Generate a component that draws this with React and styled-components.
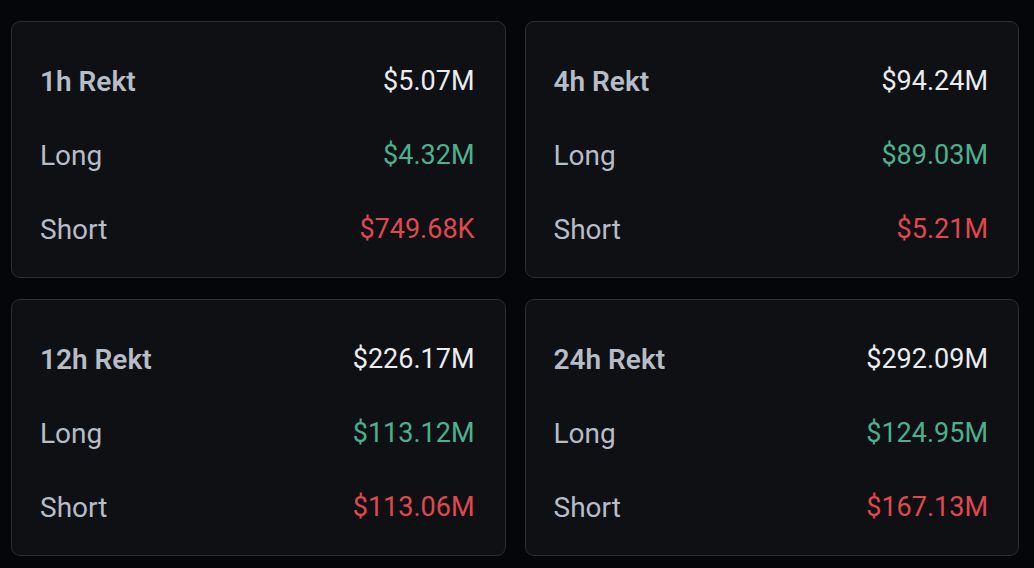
import styled, { createGlobalStyle } from 'styled-components'

const GlobalStyle = createGlobalStyle`
  html, body {
    margin: 0;
    padding: 0;
    background: #05060a;
  }
  * {
    box-sizing: border-box;
  }
`

const StyledGrid = styled.main`
  display: grid;
  grid-template-columns: 1fr 1fr;
  grid-template-rows: 1fr 1fr;
  column-gap: 19px;
  row-gap: 21px;
  height: 100vh;
  padding: 21px 15px 12px 11px;
  font-family: Roboto, 'Liberation Sans', sans-serif;
`

const StyledCard = styled.section`
  display: flex;
  flex-direction: column;
  padding: 22px 30px 10px 28px;
  background-color: #0e1014;
  border: 1px solid #2a2d34;
  border-radius: 9px;
`

const StyledRow = styled.div`
  display: flex;
  align-items: center;
  justify-content: space-between;
  height: 74px;
`

const StyledLabel = styled.span`
  color: #b7bdc6;
  font-size: 28px;
  font-weight: ${(props) => (props.$title ? 600 : 400)};
`

const tones = {
  total: '#eaecef',
  long: '#4cb08d',
  short: '#e0484f',
}

const StyledValue = styled.span`
  color: ${(props) => tones[props.$tone]};
  font-size: 27px;
  font-weight: 400;
`

const stats = [
  { period: '1h', total: '$5.07M', long: '$4.32M', short: '$749.68K' },
  { period: '4h', total: '$94.24M', long: '$89.03M', short: '$5.21M' },
  { period: '12h', total: '$226.17M', long: '$113.12M', short: '$113.06M' },
  { period: '24h', total: '$292.09M', long: '$124.95M', short: '$167.13M' },
]

const RektCard = ({ period, total, long, short }) => {
  return (
    <StyledCard>
      <StyledRow>
        <StyledLabel $title>{period} Rekt</StyledLabel>
        <StyledValue $tone="total">{total}</StyledValue>
      </StyledRow>
      <StyledRow>
        <StyledLabel>Long</StyledLabel>
        <StyledValue $tone="long">{long}</StyledValue>
      </StyledRow>
      <StyledRow>
        <StyledLabel>Short</StyledLabel>
        <StyledValue $tone="short">{short}</StyledValue>
      </StyledRow>
    </StyledCard>
  )
}

const App = () => {
  return (
    <>
      <GlobalStyle />
      <StyledGrid>
        {stats.map((s) => (
          <RektCard key={s.period} {...s} />
        ))}
      </StyledGrid>
    </>
  )
}

export default App
